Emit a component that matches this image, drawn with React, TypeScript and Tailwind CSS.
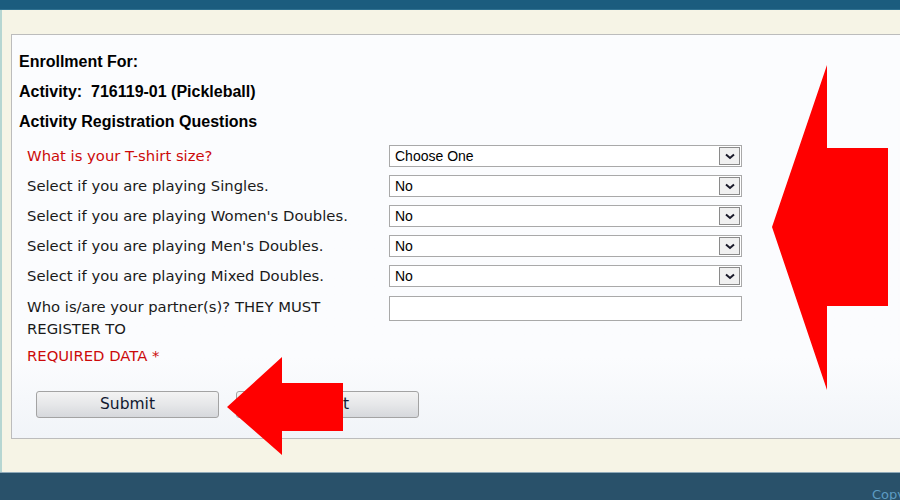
import React from "react";

const questions = [
  { label: "What is your T-shirt size?", value: "Choose One", required: true },
  { label: "Select if you are playing Singles.", value: "No" },
  { label: "Select if you are playing Women's Doubles.", value: "No" },
  { label: "Select if you are playing Men's Doubles.", value: "No" },
  { label: "Select if you are playing Mixed Doubles.", value: "No" },
];

function FakeSelect({ value }: { value: string }) {
  return (
    <div className="flex h-[22px] w-[353px] items-center border border-[#a9a9a9] bg-white pl-[5px] pr-[1px] font-['Liberation_Sans',Arial,sans-serif] text-[14px] text-black">
      <span className="flex-1">{value}</span>
      <span className="flex h-[18px] w-[21px] items-center justify-center border border-[#8a8a8a] bg-[#f0f0f0]">
        <svg width="10" height="7" viewBox="0 0 10 7">
          <path d="M1 1.5 L5 5 L9 1.5" fill="none" stroke="#1a1a2a" strokeWidth="2" />
        </svg>
      </span>
    </div>
  );
}

function Btn({ children }: { children: React.ReactNode }) {
  return (
    <button className="h-[27px] w-[183px] rounded-[3px] border border-[#a3a3a3] bg-gradient-to-b from-[#f3f3f3] via-[#e6e7e9] to-[#d6d8dc] font-['DejaVu_Sans',Verdana,sans-serif] text-[15.5px] text-[#101830]">
      {children}
    </button>
  );
}

export default function App() {
  return (
    <div className="relative flex h-[500px] w-[900px] flex-col overflow-hidden bg-[#f6f4e6]">
      <div className="h-[10px] shrink-0 border-b border-[#2f7090] bg-[#1b5c7e]" />
      <div className="flex flex-1 border-l-2 border-[#b6d6d2] pl-[9px] pt-[24px] pb-[33px]">
        <div className="flex flex-1 flex-col border border-r-0 border-[#bcbcbc] bg-gradient-to-b from-[#fbfcfe] from-80% to-[#f1f4f8] pl-[7px] pt-[12px]">
          <div className="font-['Liberation_Sans',Arial,sans-serif] text-[16px] font-bold text-black">
            <div className="flex h-[30px] items-center">Enrollment For:</div>
            <div className="flex h-[30px] items-center whitespace-pre">Activity:  716119-01 (Pickleball)</div>
            <div className="flex h-[30px] items-center">Activity Registration Questions</div>
          </div>
          <div className="mt-[4px] font-['DejaVu_Sans',Verdana,sans-serif] text-[14.8px] text-[#1a1a1a]">
            {questions.map((q) => (
              <div key={q.label} className="flex h-[30px] items-center">
                <div className={"w-[370px] pl-[8px] " + (q.required ? "text-[#cc0a0a]" : "")}>{q.label}</div>
                <FakeSelect value={q.value} />
              </div>
            ))}
            <div className="flex items-start pt-[5px]">
              <div className="w-[370px] pl-[8px] leading-[22px]">
                Who is/are your partner(s)? THEY MUST
                <br />
                REGISTER TO
              </div>
              <div className="h-[25px] w-[353px] border border-[#a9a9a9] bg-white" />
            </div>
            <div className="flex h-[32px] items-center pl-[8px] text-[#cc0a0a]">REQUIRED DATA *</div>
          </div>
          <div className="flex gap-[17px] pl-[17px] pt-[19px]">
            <Btn>Submit</Btn>
            <Btn>Reset</Btn>
          </div>
        </div>
      </div>
      <div className="relative h-[28px] shrink-0 border-t border-[#8fa9b8] bg-[#29516a]">
        <span className="absolute left-[872px] top-[12px] font-['DejaVu_Sans',Verdana,sans-serif] text-[13px] text-[#5d9bc2]">
          Copyright
        </span>
      </div>

      <svg className="pointer-events-none absolute left-0 top-0" width="900" height="500">
        <polygon points="772,227 827,65 827,148 888,148 888,306 827,306 827,390" fill="#ff0000" />
        <polygon points="227,407 282,357 282,383 343,383 343,431 282,431 282,455" fill="#ff0000" />
      </svg>
    </div>
  );
}
